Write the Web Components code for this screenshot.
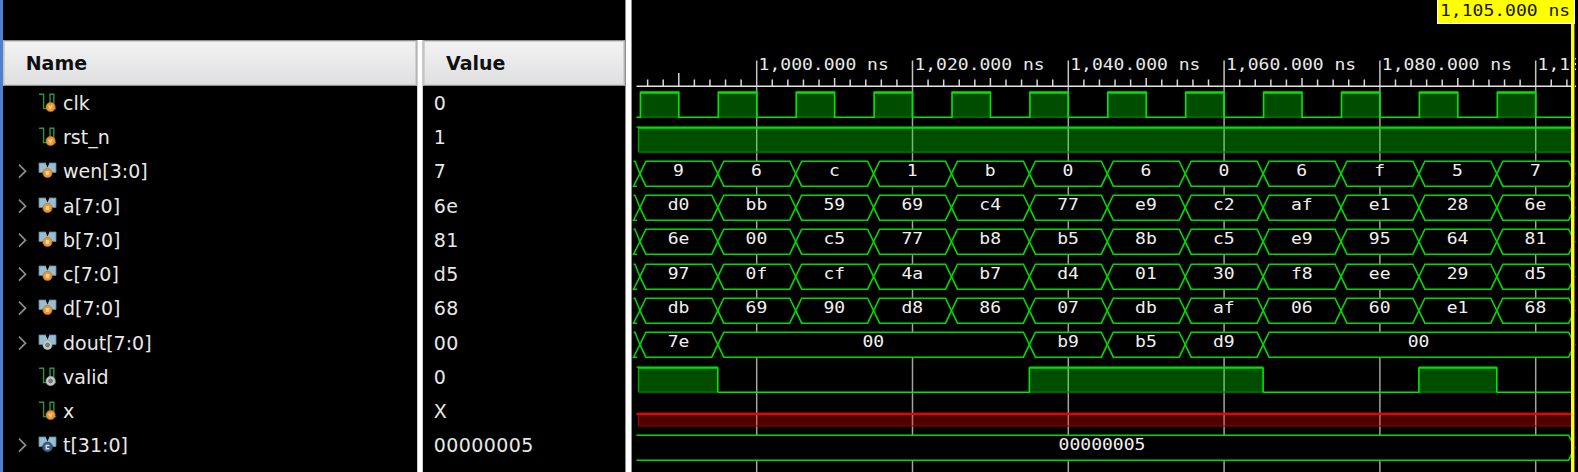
<!DOCTYPE html>
<html lang="en"><head><meta charset="utf-8"><title>Waveform</title>
<style>html,body{margin:0;background:#000;overflow:hidden}</style></head>
<body><wave-viewer></wave-viewer>
<script>
const PITCH = 34.28;
const GRID0 = 756.7, GRID = 155.8, EDGE0 = 639.9, STEP = 77.9, LEFT = 632, WIDTH = 946;
const STRETCH = 1.1;
const edge = n => EDGE0 + STEP * n - LEFT;
const bus = (...v) => v.map((t, i) => [i, i + 1, t]);
const label = (x, y, t) => `<text transform="translate(${x} ${y}) scale(${STRETCH} 1)">${t}</text>`;
const LABEL_FONT = 'font:16.4px "DejaVu Sans Mono",monospace;white-space:pre';
const SIGNALS = [
  {name:'clk', value:'0', kind:'clk', badge:'in'},
  {name:'rst_n', value:'1', kind:'level', badge:'in', spans:[[-1,13]]},
  {name:'wen[3:0]', value:'7', kind:'bus', badge:'in', spans:bus('9','6','c','1','b','0','6','0','6','f','5','7')},
  {name:'a[7:0]', value:'6e', kind:'bus', badge:'in', spans:bus('d0','bb','59','69','c4','77','e9','c2','af','e1','28','6e')},
  {name:'b[7:0]', value:'81', kind:'bus', badge:'in', spans:bus('6e','00','c5','77','b8','b5','8b','c5','e9','95','64','81')},
  {name:'c[7:0]', value:'d5', kind:'bus', badge:'in', spans:bus('97','0f','cf','4a','b7','d4','01','30','f8','ee','29','d5')},
  {name:'d[7:0]', value:'68', kind:'bus', badge:'in', spans:bus('db','69','90','d8','86','07','db','af','06','60','e1','68')},
  {name:'dout[7:0]', value:'00', kind:'bus', badge:'out', spans:[[0,1,'7e'],[1,5,'00'],[5,6,'b9'],[6,7,'b5'],[7,8,'d9'],[8,12,'00']]},
  {name:'valid', value:'0', kind:'level', badge:'out', spans:[[-1,1],[5,8],[10,11]]},
  {name:'x', value:'X', kind:'unknown', badge:'in'},
  {name:'t[31:0]', value:'00000005', kind:'wide', badge:'const'}
];
function define(tag, render) {
  customElements.define(tag, class extends HTMLElement {
    connectedCallback() {
      if (!this.shadowRoot) this.attachShadow({mode:'open'}).innerHTML = render(this);
    }
  });
}
define('signal-icon', el => {
  const b = el.getAttribute('badge'), isBus = el.hasAttribute('bus');
  const cx = isBus ? 9.5 : 12.6, cy = isBus ? 12 : 14;
  const body = isBus
    ? '<path d="M1 2H7.6L9.5 6.5L11.4 2H18V11.5H1Z" fill="#94bfd5"/><path d="M1 2V11.5H4M18 2V11.5H15M1 2H8M18 2H11" fill="none" stroke="#6f8790" stroke-width=".8"/>'
    : '<path d="M1 1.2H5.6V15.6H12V1.2H15.8V15.6H18.2" fill="none" stroke="#279545" stroke-width="1.4"/>';
  const mark = {
    in: `<circle cx="${cx}" cy="${cy}" r="4.6" fill="#f2952e" stroke="#b77429" stroke-width=".7"/>` + (isBus
        ? `<rect x="${cx-1.7}" y="${cy-1.9}" width="3.4" height="3.8" fill="#ffd7a5"/>`
        : `<path d="M${cx-1.8} ${cy-1.4}L${cx-.2} ${cy+1.5}L${cx+1.4} ${cy-2}" fill="none" stroke="#ffd9a8" stroke-width="1.3"/>`),
    out: `<circle cx="${cx}" cy="${cy}" r="4.7" fill="#c9c9c9" stroke="#999" stroke-width=".6"/><circle cx="${cx}" cy="${cy}" r="1.9" fill="#858585" stroke="#5c5c5c" stroke-width=".8"/>`,
    const: `<circle cx="${cx}" cy="${cy}" r="5" fill="#405984" stroke="#30466b" stroke-width=".6"/><path d="M${cx+1.9} ${cy-1.6}H${cx-1.2}V${cy+1.7}H${cx+1.9}" fill="none" stroke="#d9e0ec" stroke-width="1.5"/>`
  }[b];
  return `<style>:host{display:block;width:19px;height:20px}svg{display:block}</style><svg width="19" height="20">${body}${mark}</svg>`;
});
define('name-row', el => `<style>
  :host{display:flex;align-items:center;height:${PITCH}px;box-sizing:border-box;padding-left:15px;color:#e8e8e8}
  .arrow{width:9px;height:16px;margin-right:11px;display:block}
  signal-icon{margin-right:6.5px}
  span{white-space:pre;line-height:24px}</style>
  <svg class="arrow">${el.hasAttribute('bus') ? '<path d="M1 1.7L7.5 8.2L1 14.7" fill="none" stroke="#8c8c8c" stroke-width="1.7"/>' : ''}</svg>
  <signal-icon badge="${el.getAttribute('badge')}" ${el.hasAttribute('bus') ? 'bus' : ''}></signal-icon><span><slot></slot></span>`);
define('value-row', () => `<style>
  :host{display:flex;align-items:center;height:${PITCH}px;padding-left:10.8px;color:#e8e8e8;letter-spacing:.4px}
  span{line-height:24px}</style><span><slot></slot></span>`);
define('signal-column', el => `<style>
  :host{display:block;box-sizing:border-box;padding-top:40px}
  header{height:46px;box-sizing:border-box;border:1px solid #8e8e8e;border-left-color:#c4c4c4;border-right-color:#b5b5b5;
    box-shadow:inset 0 0 0 1px #d0d0d0;background:linear-gradient(#f3f3f3,#dfdfe1);color:#101010;font-weight:bold;
    display:flex;align-items:center;padding-left:var(--indent)}
  .rows{margin-top:-.4px}</style><header><span>${el.getAttribute('label')}</span></header><div class="rows"><slot></slot></div>`);
define('time-ruler', () => {
  let s = '';
  for (let i = -14; i <= 52; i++) {
    const x = GRID0 + i * GRID / 10 - LEFT;
    if (x < 6 || x > 942) continue;
    const major = i % 10 === 0, y = major ? 60.5 : i % 5 === 0 ? (i < 0 ? 73 : 78) : 79.5;
    s += `<path d="M${x} ${y}V86" stroke="${major ? '#c4c4c4' : '#d8d8d8'}" stroke-width="1.5"/>`;
  }
  ['1,000','1,020','1,040','1,060','1,080','1,100'].forEach((t, i) => {
    s += label(GRID0 + i * GRID - LEFT + 1.9, 70, t + '.000 ns');
  });
  return `<style>:host{display:block;height:86.4px}svg{display:block;overflow:hidden}
  text{${LABEL_FONT};fill:#e8e8e8}</style>
  <svg width="944" height="88">${s}<path d="M4.5 86.3H944" stroke="#e4e4e4" stroke-width="1.5"/></svg>`;
});
define('wave-trace', el => {
  const sig = SIGNALS[+el.getAttribute('index')], T = 6.2, B = 31.2, M = 18.7;
  let s = '';
  const high = (a, b) => {
    s += `<rect x="${a}" y="${T}" width="${b-a}" height="${B-T}" fill="#00ff00" fill-opacity=".3"/>
      <path d="M${a} ${B}H${b}" stroke="#008400" stroke-width="1.3"/><path d="M${a} ${T+.4}H${b}" stroke="#00e000" stroke-width="2.2"/>`;
  };
  if (sig.kind === 'clk') {
    let d = `M4.5 ${B}`;
    for (let n = 0; n < 12; n++) {
      const a = edge(n) + .5, b = edge(n) + STEP / 2;
      high(a, b);
      d += `H${a}V${T}H${b}V${B}`;
    }
    s += `<path d="${d}H941" fill="none" stroke="#00e800" stroke-width="1.6"/>`;
  } else if (sig.kind === 'level') {
    let d = '', pos = 4.5;
    for (const [n, m] of sig.spans) {
      const a = n < 0 ? 6.5 : edge(n), b = m > 12 ? 942 : edge(m);
      if (n >= 0) d += `M${pos} ${B}H${a}V${T}`;
      else s += `<path d="M${a} ${T}V${B}" stroke="#009600" stroke-width="1.3"/><path d="M4.5 ${T}H8" stroke="#00c800" stroke-width="1.5"/>`;
      high(a, b);
      if (m <= 12) d += `M${b} ${T}V${B}`;
      pos = b;
    }
    s += `<path d="${d}${pos < 941 ? `M${pos} ${B}H941` : ''}" fill="none" stroke="#00e800" stroke-width="1.6"/>`;
  } else if (sig.kind === 'unknown') {
    s = `<rect x="6.5" y="18.6" width="935" height="12.4" fill="#f00" fill-opacity=".3"/>
      <path d="M6.5 19V31H942" fill="none" stroke="#a00000" stroke-width="1.2"/><path d="M4.5 18.9H942" stroke="#f00000" stroke-width="2.2"/>`;
  } else if (sig.kind === 'wide') {
    const e = edge(12);
    s = `<path d="M4.5 ${T}H${e-6}L${e} ${M}L${e-6} ${B}H4.5" fill="#000" stroke="#00da00" stroke-width="1.6"/>` + label(470, 20.6, '00000005');
  } else {
    s = `<path d="M1.5 ${T}H3L${edge(0)} ${M}L1.5 ${B}H5" fill="none" stroke="#00da00" stroke-width="1.5"/>`;
    for (const [n, m, t] of sig.spans) {
      const a = edge(n), b = edge(m);
      s += `<path d="M${a} ${M}L${a+6} ${T}H${b-6}L${b} ${M}L${b-6} ${B}H${a+6}Z" fill="#000" stroke="#00da00" stroke-width="1.6"/>` + label((a+b)/2-.3, 20.6, t);
    }
  }
  return `<style>:host{display:block;height:${PITCH}px}svg{display:block;overflow:hidden}
  text{${LABEL_FONT};text-anchor:middle;fill:#f0f0f0}</style><svg width="944" height="${PITCH}">${s}</svg>`;
});
define('time-cursor', () => `<style>
  :host{position:absolute;right:3px;top:0;height:100%;width:139px;display:block}
  i{position:absolute;right:0;top:0;height:100%;background:#ff0;border-right:1px solid #6b6b00;box-sizing:border-box;width:4px}
  div{position:absolute;top:0;left:1px;right:0;height:23.5px;box-sizing:border-box;border:1.5px solid #fff;border-top:0;background:#ff0}
  svg{display:block}text{${LABEL_FONT};fill:#161600}</style><i></i><div><svg width="135" height="21">${label(2, 15.5, '1,105.000 ns')}</svg></div>`);
define('wave-pane', () => {
  let g = '';
  for (let i = 0; i < 6; i++) g += `<path d="M${GRID0 + i * GRID - LEFT} 86V472" stroke="#a3a3a3" stroke-width="1.5"/>`;
  return `<style>:host{display:block;position:relative;overflow:hidden;height:472px}
  .grid{position:absolute;left:0;top:0}.rows{position:relative}</style>
  <svg class="grid" width="${WIDTH}" height="472">${g}</svg>
  <div class="rows"><time-ruler></time-ruler>${SIGNALS.map((_, i) => `<wave-trace index="${i}"></wave-trace>`).join('')}</div><time-cursor></time-cursor>`;
});
define('wave-viewer', () => `<style>
  :host{display:grid;grid-template-columns:2.5px 414.5px 6px 202px 7px 946px;width:1578px;height:472px;overflow:hidden;background:#000;
    font:19px "DejaVu Sans",sans-serif}
  .edge{background:#4d80cf}.split{background:#fff;border:solid #8e8e8e;border-width:0 1px;box-sizing:border-box}
  .short{margin-top:40px;border-color:#ccc}
  signal-column{height:472px;overflow:hidden}</style>
  <div class="edge"></div>
  <signal-column label="Name" style="--indent:22.2px">${SIGNALS.map(s => `<name-row badge="${s.badge}" ${s.name.includes('[') ? 'bus' : ''}>${s.name}</name-row>`).join('')}</signal-column>
  <div class="split short"></div>
  <signal-column label="Value" style="--indent:22px">${SIGNALS.map(s => `<value-row>${s.value}</value-row>`).join('')}</signal-column>
  <div class="split"></div><wave-pane></wave-pane>`);
</script></body></html>
